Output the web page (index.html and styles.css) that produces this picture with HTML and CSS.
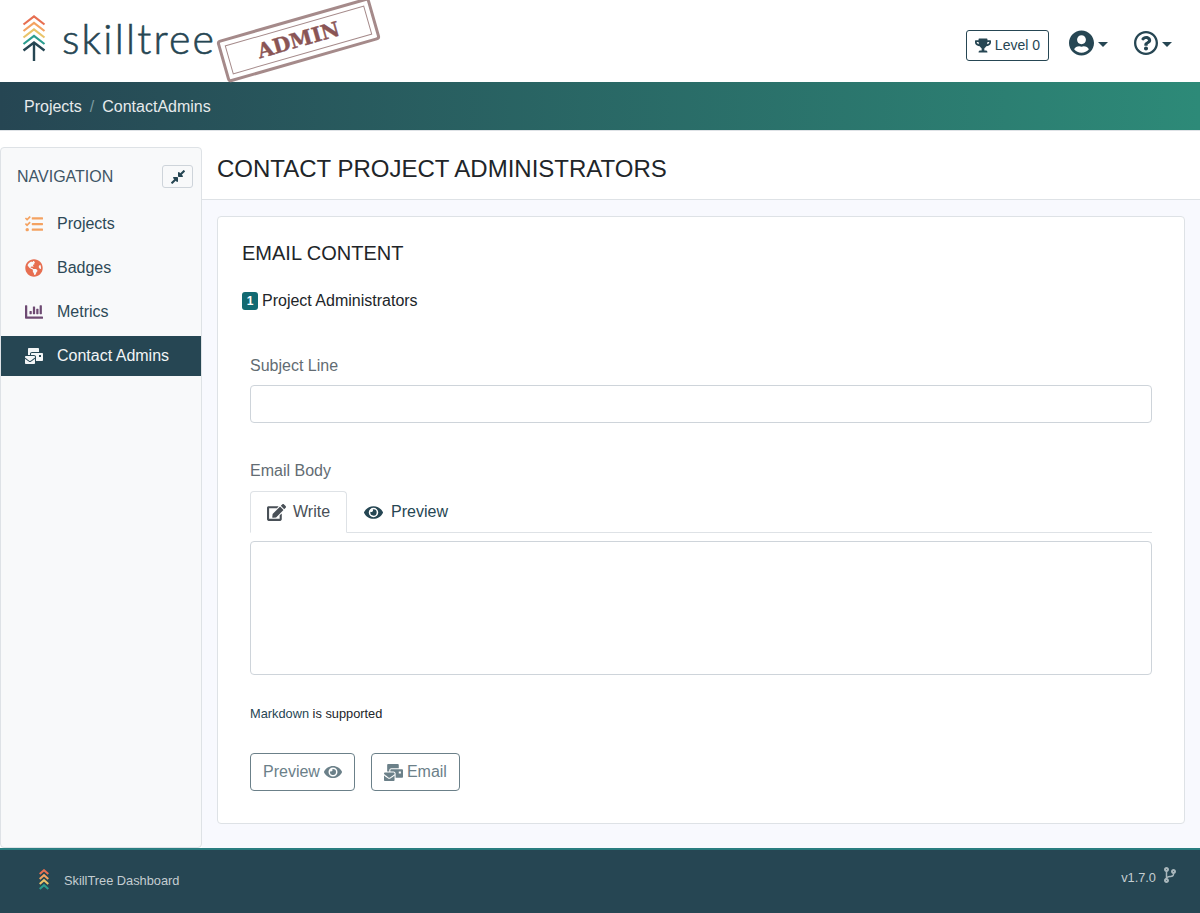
FILE: index.html
```html
<!DOCTYPE html>
<html lang="en">
<head>
<meta charset="utf-8">
<title>SkillTree Dashboard</title>
<link rel="stylesheet" href="styles.css">
</head>
<body>
<svg class="defs" width="0" height="0" aria-hidden="true">
  <defs>
    <symbol id="i-eye" viewBox="0 0 576 512"><path fill="currentColor" d="M572.52 241.4C518.29 135.59 410.93 64 288 64S57.68 135.64 3.48 241.41a32.35 32.35 0 0 0 0 29.19C57.71 376.41 165.07 448 288 448s230.32-71.64 284.52-177.41a32.35 32.35 0 0 0 0-29.19zM288 400a144 144 0 1 1 144-144 143.93 143.93 0 0 1-144 144zm0-240a95.31 95.31 0 0 0-25.31 3.79 47.85 47.85 0 0 1-66.9 66.9A95.78 95.78 0 1 0 288 160z"/></symbol>
    <symbol id="i-mail" viewBox="0 0 576 512"><path fill="currentColor" d="M160 448c-25.6 0-51.2-22.4-64-32-64-44.8-83.2-60.8-96-70.4V480c0 17.67 14.33 32 32 32h256c17.67 0 32-14.33 32-32V345.6c-12.8 9.6-32 25.6-96 70.4-12.8 9.6-38.4 32-64 32zm128-192H32c-17.67 0-32 14.33-32 32v16c25.6 19.2 22.4 19.2 115.2 86.4 9.6 6.4 28.8 25.6 44.8 25.6s35.2-19.2 44.8-22.4c92.8-67.2 89.6-67.2 115.2-86.4V288c0-17.67-14.33-32-32-32zm256-96H224c-17.67 0-32 14.33-32 32v32h96c33.21 0 60.59 25.42 63.71 57.82l.29-.22V416h192c17.67 0 32-14.33 32-32V192c0-17.67-14.33-32-32-32zm-32 128h-64v-64h64v64zm-352-96c0-35.29 28.71-64 64-64h224V32c0-17.67-14.33-32-32-32H128C110.33 0 96 14.33 96 32v192h64v-32z"/></symbol>
  </defs>
</svg>

<header class="topbar">
  <div class="brand">
    <svg class="brand-mark" viewBox="0 0 24 46" aria-hidden="true">
      <g class="brand-chevrons">
        <path class="chev-1" d="M1.500 9.500 12 1.500l10.500 8"/>
        <path class="chev-2" d="M1.500 16 12 8l10.500 8"/>
        <path class="chev-3" d="M1.500 22.500 12 14.500l10.500 8"/>
        <path class="chev-4" d="M1.500 29 12 21l10.500 8"/>
      </g>
      <path class="brand-stem" d="M1.500 35.500 12 27.500l10.500 8M12 27.500V46"/>
    </svg>
    <span class="brand-name">skilltree</span>
    <div class="stamp"><span class="stamp-text">ADMIN</span></div>
  </div>
  <div class="top-actions">
    <span class="level">
      <svg class="level-icon" viewBox="0 0 576 512" aria-hidden="true"><path fill="currentColor" d="M552 64H448V24c0-13.300-10.700-24-24-24H152c-13.300 0-24 10.700-24 24v40H24C10.700 64 0 74.700 0 88v56c0 35.700 22.500 72.400 61.900 100.700 31.500 22.700 69.800 37.100 110 41.700C203.300 338.500 240 360 240 360v72h-48c-35.300 0-64 20.700-64 56v12c0 6.600 5.400 12 12 12h296c6.600 0 12-5.400 12-12v-12c0-35.300-28.700-56-64-56h-48v-72s36.700-21.500 68.100-73.600c40.300-4.600 78.600-19 110-41.700 39.300-28.300 61.900-65 61.900-100.700V88c0-13.300-10.700-24-24-24zM99.300 192.800C74.900 175.200 64 155.600 64 144v-16h64.200c1 32.600 5.800 61.200 12.800 86.200-15.100-5.200-29.200-12.400-41.700-21.400zM512 144c0 16.100-17.700 36.100-35.300 48.800-12.500 9-26.700 16.200-41.800 21.400 7-25 11.800-53.600 12.800-86.200H512v16z"/></svg>
      <span>Level 0</span>
    </span>
    <span class="menu menu-user">
      <svg class="menu-icon" viewBox="0 0 496 512" aria-hidden="true"><path fill="currentColor" d="M248 8C111 8 0 119 0 256s111 248 248 248 248-111 248-248S385 8 248 8zm0 96c48.600 0 88 39.400 88 88s-39.400 88-88 88-88-39.400-88-88 39.400-88 88-88zm0 344c-58.700 0-111.300-26.600-146.500-68.200 18.800-35.400 55.600-59.800 98.500-59.800 2.400 0 4.800.4 7.100 1.100 13 4.200 26.600 6.900 40.900 6.900 14.300 0 28-2.700 40.900-6.900 2.300-.7 4.700-1.100 7.100-1.100 42.900 0 79.700 24.400 98.500 59.800C359.300 421.400 306.700 448 248 448z"/></svg>
      <span class="caret"></span>
    </span>
    <span class="menu menu-help">
      <svg class="menu-icon" viewBox="8 8 496 496" aria-hidden="true"><path fill="currentColor" d="M256 8C119 8 8 119.043 8 256c0 136.997 111 248 248 248s248-111.003 248-248C504 119.083 393 8 256 8zm0 448c-110.532 0-200-89.431-200-200 0-110.495 89.472-200 200-200 110.491 0 200 89.471 200 200 0 110.530-89.431 200-200 200zm107.244-255.200c0 67.052-72.421 68.084-72.421 92.863V300c0 6.627-5.373 12-12 12h-45.647c-6.627 0-12-5.373-12-12v-8.659c0-35.745 27.100-50.034 47.579-61.516 17.561-9.845 28.324-16.541 28.324-29.579 0-17.246-21.999-28.693-39.784-28.693-23.189 0-33.894 10.977-48.942 29.969-4.057 5.120-11.460 6.071-16.666 2.124l-27.824-21.098c-5.107-3.872-6.251-11.066-2.644-16.363C184.846 131.491 214.940 112 261.794 112c49.071 0 101.450 38.304 101.450 88.800zM298 368c0 23.159-18.841 42-42 42s-42-18.841-42-42 18.841-42 42-42 42 18.841 42 42z"/></svg>
      <span class="caret"></span>
    </span>
  </div>
</header>

<nav class="crumbs">
  <span class="crumb-link">Projects</span>
  <span class="crumb-sep">/</span>
  <span class="crumb-current">ContactAdmins</span>
</nav>

<div class="layout">
  <aside class="sidebar">
    <div class="side-head">
      <span class="side-title">NAVIGATION</span>
      <span class="collapse">
        <svg viewBox="0 0 448 512" aria-hidden="true"><path fill="currentColor" d="M4.686 427.314L104 328l-32.922-31.029C55.958 281.851 66.666 256 88.048 256h112C213.303 256 224 266.745 224 280v112c0 21.382-25.803 32.090-40.922 16.971L152 376l-99.314 99.314c-6.248 6.248-16.379 6.248-22.627 0L4.686 449.941c-6.248-6.248-6.248-16.379 0-22.627zM443.314 84.686L344 184l32.922 31.029c15.120 15.120 4.412 40.971-16.970 40.971h-112C234.697 256 224 245.255 224 232V120c0-21.382 25.803-32.090 40.922-16.971L296 136l99.314-99.314c6.248-6.248 16.379-6.248 22.627 0l25.373 25.373c6.248 6.248 6.248 16.379 0 22.627z"/></svg>
      </span>
    </div>
    <ul class="side-list">
      <li class="side-item">
        <svg class="side-icon icon-projects" viewBox="0 0 512 512" aria-hidden="true"><path fill="currentColor" d="M139.610 35.500a12 12 0 0 0-17 0L58.930 98.810l-22.700-22.120a12 12 0 0 0-17 0L3.530 92.410a12 12 0 0 0 0 17l47.590 47.400a12.780 12.780 0 0 0 17.610 0l15.590-15.620L156.520 69a12.090 12.090 0 0 0 .09-17zm0 159.190a12 12 0 0 0-17 0l-63.680 63.720-22.700-22.100a12 12 0 0 0-17 0L3.530 252a12 12 0 0 0 0 17L51 316.500a12.770 12.770 0 0 0 17.600 0l15.700-15.690 72.200-72.220a12 12 0 0 0 .09-16.900zM64 368c-26.490 0-48.590 21.500-48.590 48S37.530 464 64 464a48 48 0 0 0 0-96zm432 16H208a16 16 0 0 0-16 16v32a16 16 0 0 0 16 16h288a16 16 0 0 0 16-16v-32a16 16 0 0 0-16-16zm0-320H208a16 16 0 0 0-16 16v32a16 16 0 0 0 16 16h288a16 16 0 0 0 16-16V80a16 16 0 0 0-16-16zm0 160H208a16 16 0 0 0-16 16v32a16 16 0 0 0 16 16h288a16 16 0 0 0 16-16v-32a16 16 0 0 0-16-16z"/></svg>
        Projects
      </li>
      <li class="side-item">
        <svg class="side-icon icon-badges" viewBox="0 0 496 512" aria-hidden="true"><path fill="currentColor" d="M248 8C111.030 8 0 119.030 0 256s111.030 248 248 248 248-111.030 248-248S384.970 8 248 8zm82.290 357.600c-3.900 3.880-7.990 7.950-11.310 11.280-2.990 3-5.100 6.700-6.170 10.710-1.510 5.660-2.730 11.380-4.770 16.870l-17.390 46.850c-13.760 3-28 4.690-42.650 4.690v-27.380c1.690-12.620-7.640-36.260-22.630-51.250-6-6-9.370-14.140-9.370-22.630v-32.010c0-11.640-6.270-22.340-16.460-27.970-14.370-7.950-34.810-19.060-48.810-26.110-11.480-5.780-22.100-13.140-31.650-21.750l-.8-.72a114.792 114.792 0 0 1-18.060-20.740c-9.380-13.770-24.660-36.420-34.590-51.140 20.470-45.500 57.360-82.040 103.200-101.890l24.010 12.010C203.480 89.740 216 82.010 216 70.110v-11.300c7.990-1.290 16.120-2.110 24.450-2.490l28.300 28.300c6.250 6.250 6.250 16.380 0 22.630L264 112l-10.340 10.340c-3.120 3.120-3.120 8.190 0 11.310l4.690 4.690c3.120 3.120 3.120 8.190 0 11.310l-8 8a8.008 8.008 0 0 1-5.660 2.340h-8.990c-2.080 0-4.080.81-5.580 2.270l-9.920 9.650a8.008 8.008 0 0 0-1.580 9.310l15.590 31.190c2.660 5.320-1.210 11.580-7.150 11.580h-5.640c-1.930 0-3.790-.7-5.240-1.960l-9.280-8.060a16.017 16.017 0 0 0-15.550-3.100l-31.170 10.390a11.950 11.950 0 0 0-8.170 11.340c0 4.530 2.560 8.660 6.610 10.690l11.080 5.540c9.410 4.710 19.790 7.160 30.310 7.160s22.590 27.290 32 32h66.750c8.490 0 16.620 3.370 22.630 9.370l13.690 13.690a30.503 30.503 0 0 1 8.930 21.570 46.536 46.536 0 0 1-13.720 32.980zM417 274.250c-5.790-1.450-10.840-5-14.150-9.970l-17.980-26.970a23.970 23.970 0 0 1 0-26.620l19.590-29.380c2.320-3.470 5.500-6.290 9.240-8.150l12.980-6.490C440.200 193.590 448 223.870 448 256c0 8.670-.74 17.160-1.820 25.540L417 274.250z"/></svg>
        Badges
      </li>
      <li class="side-item">
        <svg class="side-icon icon-metrics" viewBox="0 0 512 512" aria-hidden="true"><path fill="currentColor" d="M332.800 320h38.400c6.400 0 12.800-6.400 12.800-12.800V172.800c0-6.400-6.400-12.800-12.800-12.800h-38.400c-6.400 0-12.800 6.400-12.800 12.800v134.400c0 6.400 6.400 12.800 12.800 12.800zm96 0h38.400c6.400 0 12.800-6.400 12.800-12.800V76.800c0-6.400-6.400-12.800-12.800-12.800h-38.400c-6.400 0-12.800 6.400-12.800 12.800v230.400c0 6.400 6.400 12.800 12.800 12.800zm-288 0h38.400c6.400 0 12.800-6.400 12.800-12.800v-70.400c0-6.400-6.400-12.800-12.800-12.800h-38.400c-6.400 0-12.800 6.400-12.800 12.800v70.400c0 6.400 6.400 12.800 12.800 12.800zm96 0h38.400c6.400 0 12.800-6.400 12.800-12.800V108.800c0-6.400-6.400-12.800-12.800-12.800h-38.400c-6.400 0-12.800 6.400-12.800 12.800v198.400c0 6.400 6.400 12.800 12.800 12.800zM496 384H64V80c0-8.840-7.160-16-16-16H16C7.160 64 0 71.160 0 80v336c0 17.670 14.330 32 32 32h464c8.840 0 16-7.160 16-16v-32c0-8.840-7.160-16-16-16z"/></svg>
        Metrics
      </li>
      <li class="side-item side-active">
        <svg class="side-icon" aria-hidden="true"><use href="#i-mail"/></svg>
        Contact Admins
      </li>
    </ul>
  </aside>

  <main class="content">
    <div class="page-head"><h1 class="page-title">CONTACT PROJECT ADMINISTRATORS</h1></div>
    <div class="page-body">
      <section class="card">
        <h2 class="card-title">EMAIL CONTENT</h2>
        <p class="recipients"><span class="count">1</span> Project Administrators</p>
        <form class="form">
          <label class="field-label">Subject Line</label>
          <input class="input" type="text">
          <label class="field-label body-label">Email Body</label>
          <div class="tabs">
            <span class="tab tab-active">
              <svg class="tab-icon" viewBox="0 0 576 512" aria-hidden="true"><path fill="currentColor" d="M402.600 83.200l90.200 90.200c3.800 3.800 3.800 10 0 13.800L274.400 405.600l-92.800 10.300c-12.400 1.400-22.900-9.100-21.500-21.500l10.300-92.800L388.800 83.200c3.800-3.800 10-3.800 13.800 0zm162-22.900l-48.800-48.800c-15.200-15.200-39.900-15.200-55.200 0l-35.400 35.400c-3.800 3.800-3.800 10 0 13.800l90.200 90.200c3.800 3.800 10 3.800 13.800 0l35.400-35.400c15.200-15.300 15.200-40 0-55.200zM384 346.200V448H64V128h229.800c3.200 0 6.200-1.300 8.500-3.500l40-40c7.600-7.600 2.200-20.500-8.500-20.500H48C21.500 64 0 85.500 0 112v352c0 26.500 21.500 48 48 48h352c26.500 0 48-21.500 48-48V306.200c0-10.700-12.900-16-20.500-8.500l-40 40c-2.200 2.300-3.500 5.300-3.500 8.500z"/></svg>
              Write
            </span>
            <span class="tab">
              <svg class="tab-icon" aria-hidden="true"><use href="#i-eye"/></svg>
              Preview
            </span>
          </div>
          <textarea class="editor"></textarea>
          <p class="hint"><span class="hint-link">Markdown</span> is supported</p>
          <div class="actions">
            <span class="btn">Preview <svg class="btn-eye" aria-hidden="true"><use href="#i-eye"/></svg></span>
            <span class="btn"><svg class="btn-mail" aria-hidden="true"><use href="#i-mail"/></svg> Email</span>
          </div>
        </form>
      </section>
    </div>
  </main>
</div>

<footer class="footer">
  <div class="foot-brand">
    <svg class="foot-mark" viewBox="0 0 10 21" aria-hidden="true">
      <g class="foot-chevrons">
        <path class="chev-1" d="M.7 5 5 1.200 9.300 5"/>
        <path class="chev-2" d="M.7 10 5 6.200 9.300 10"/>
        <path class="chev-3" d="M.7 15 5 11.200 9.300 15"/>
        <path class="chev-4" d="M.7 20 5 16.200 9.300 20"/>
      </g>
    </svg>
    <span class="foot-name">SkillTree Dashboard</span>
  </div>
  <div class="foot-version">
    <span class="foot-number">v1.7.0</span>
    <svg class="foot-branch" viewBox="0 0 384 512" aria-hidden="true"><path fill="currentColor" d="M384 144c0-44.200-35.800-80-80-80s-80 35.800-80 80c0 36.400 24.300 67.100 57.500 76.800-.6 16.100-4.200 28.500-11 36.900-15.400 19.200-49.300 22.400-85.200 25.700-28.200 2.600-57.400 5.400-81.300 16.900v-144c32.500-10.200 56-40.500 56-76.300 0-44.200-35.800-80-80-80S0 35.800 0 80c0 35.800 23.500 66.100 56 76.300v199.300C23.500 365.900 0 396.200 0 432c0 44.200 35.800 80 80 80s80-35.800 80-80c0-34-21.200-63.100-51.200-74.600 3.100-5.200 7.800-9.800 14.900-13.400 16.200-8.200 40.400-10.400 66.100-12.800 42.200-3.900 90-8.400 118.200-43.400 14-17.400 21.100-39.800 21.600-67.900 31.600-10.800 54.400-40.700 54.400-75.900zM80 64c8.800 0 16 7.200 16 16s-7.200 16-16 16-16-7.200-16-16 7.200-16 16-16zm0 384c-8.800 0-16-7.200-16-16s7.200-16 16-16 16 7.200 16 16-7.200 16-16 16zm224-320c8.800 0 16 7.200 16 16s-7.200 16-16 16-16-7.200-16-16 7.200-16 16-16z"/></svg>
  </div>
</footer>
</body>
</html>
```

FILE: styles.css
```css
* { box-sizing: border-box; }
html, body { margin: 0; padding: 0; }
body {
  font-family: "Liberation Sans", Arial, sans-serif;
  font-size: 16px;
  line-height: 24px;
  color: #212529;
  background: #fff;
}
.defs { position: absolute; }

.topbar {
  height: 82px;
  display: flex;
  justify-content: space-between;
  padding: 0 28px 0 22px;
  background: #fff;
}
.brand { position: relative; display: flex; align-items: flex-start; }
.brand-mark { width: 24px; height: 46px; margin-top: 15px; }
.brand-chevrons, .foot-chevrons { fill: none; }
.brand-chevrons { stroke-width: 2.200; }
.foot-chevrons { stroke-width: 2; }
.chev-1 { stroke: #e76f51; }
.chev-2 { stroke: #f4a261; }
.chev-3 { stroke: #e9c46a; }
.chev-4 { stroke: #2a9d8f; }
.brand-stem { fill: none; stroke: #264653; stroke-width: 2.400; }
.brand-name {
  margin: 11px 0 0 16px;
  font-family: "Lato", sans-serif;
  font-weight: 300;
  font-size: 41px;
  line-height: 56px;
  letter-spacing: 2.200px;
  color: #264653;
  -webkit-text-stroke: 0.600px #264653;
}
.stamp {
  position: absolute;
  left: 197px;
  top: 18px;
  width: 159px;
  height: 44px;
  transform: rotate(-16deg);
  border: 3px solid #a58a8a;
  border-radius: 4px;
  outline: 1.500px solid #a58a8a;
  outline-offset: -8px;
  display: flex;
  align-items: center;
  justify-content: center;
}
.stamp-text {
  font-family: "DejaVu Serif", serif;
  font-weight: 700;
  font-size: 20.500px;
  line-height: 24px;
  color: #8a5555;
  -webkit-text-stroke: 0.400px #8a5555;
}
.top-actions { display: flex; align-items: flex-start; color: #264653; }
.level {
  display: flex;
  align-items: center;
  gap: 4px;
  height: 31px;
  margin-top: 30px;
  padding: 0 8px 1px;
  border: 1px solid #264653;
  border-radius: 3px;
  font-size: 14px;
}
.level-icon { width: 16px; height: 15px; }
.menu { display: flex; align-items: center; margin-top: 30px; }
.menu-user { margin-left: 20px; }
.menu-help { margin-left: 26px; }
.menu-icon { width: 25px; height: 26px; }
.menu-help .menu-icon { width: 24px; }
.caret {
  width: 0;
  height: 0;
  margin: 3px 0 0 4px;
  border: 5px solid transparent;
  border-top-color: #264653;
  border-bottom-width: 0;
}

.crumbs {
  height: 49px;
  display: flex;
  align-items: center;
  gap: 8px;
  padding: 1px 24px 0;
  background: linear-gradient(90deg, #264653, #2d8a78);
  border-bottom: 1px solid #dee2e6;
  color: #e6eaec;
}
.crumb-sep { color: #7c9aa0; }

.layout { display: flex; height: 717px; }
.sidebar {
  flex: none;
  width: 202px;
  height: 701px;
  margin-top: 16px;
  background: #f8f9fa;
  border: 1px solid #dee2e6;
  border-radius: 4px;
}
.side-head {
  display: flex;
  justify-content: space-between;
  align-items: center;
  height: 56px;
  padding: 1px 8px 0 16px;
}
.side-title { color: #3f5566; }
.collapse {
  display: flex;
  align-items: center;
  justify-content: center;
  width: 31px;
  height: 23px;
  border: 1px solid #ced4da;
  border-radius: 3px;
  background: #f8f9fa;
  color: #264653;
}
.collapse svg { width: 14px; height: 16px; }
.side-list {
  display: flex;
  flex-direction: column;
  gap: 4px;
  margin: 0;
  padding: 0;
  list-style: none;
}
.side-item {
  display: flex;
  align-items: center;
  gap: 14px;
  height: 40px;
  padding-left: 24px;
  color: #2d4957;
}
.side-active { background: #264653; color: #f3f5f6; }
.side-icon { flex: none; width: 18px; height: 18px; }
.icon-projects { color: #f4a261; }
.icon-badges { color: #e76f51; }
.icon-metrics { color: #6d4a72; }

.content { flex: 1; min-width: 0; display: flex; flex-direction: column; }
.page-head {
  flex: none;
  height: 69px;
  padding: 0 15px;
  background: #fff;
  border-bottom: 1px solid #dee2e6;
}
.page-title {
  margin: 0;
  padding-top: 20px;
  font-size: 24px;
  line-height: 36px;
  font-weight: 400;
}
.page-body { flex: 1; padding: 16px 15px 24px; background: #f8f9fe; }
.card {
  height: 608px;
  padding: 22px 24px 0;
  background: #fff;
  border: 1px solid #dee2e6;
  border-radius: 4px;
}
.card-title {
  margin: 0;
  font-size: 20px;
  line-height: 28px;
  font-weight: 400;
}
.recipients {
  display: flex;
  align-items: center;
  gap: 4px;
  margin: 22px 0 0;
}
.count {
  display: flex;
  align-items: center;
  justify-content: center;
  width: 16px;
  height: 18px;
  background: #126a72;
  border-radius: 3px;
  color: #fff;
  font-size: 12px;
  font-weight: 700;
}
.form { display: flex; flex-direction: column; padding: 0 8px; margin-top: 41px; }
.field-label { display: block; margin-bottom: 7px; color: #636c73; }
.input {
  display: block;
  width: 100%;
  height: 38px;
  border: 1px solid #ced4da;
  border-radius: 4px;
  background: #fff;
}
.body-label { margin-top: 36px; margin-bottom: 8px; }
.tabs {
  display: flex;
  height: 42px;
  border-bottom: 1px solid #dee2e6;
}
.tab {
  display: flex;
  align-items: center;
  gap: 8px;
  height: 42px;
  padding: 0 16px;
  color: #264653;
  border: 1px solid transparent;
}
.tab-active {
  gap: 7px;
  color: #495057;
  background: #fff;
  border-color: #dee2e6 #dee2e6 #fff;
  border-radius: 4px 4px 0 0;
}
.tab-icon { width: 19px; height: 17px; }
.editor {
  display: block;
  width: 100%;
  height: 134px;
  margin: 8px 0 0;
  border: 1px solid #ced4da;
  border-radius: 4px;
  background: #fff;
  resize: none;
}
.hint { margin: 27px 0 0; font-size: 12.800px; line-height: 24px; }
.hint-link { color: #264653; }
.actions { display: flex; gap: 16px; margin-top: 27px; }
.btn {
  display: flex;
  align-items: center;
  gap: 4px;
  height: 38px;
  padding: 0 12px;
  border: 1px solid #6b8089;
  border-radius: 4px;
  color: #6b8089;
}
.btn-eye { width: 18px; height: 16px; }
.btn-mail { width: 19px; height: 17px; }

.footer {
  height: 65px;
  display: flex;
  justify-content: space-between;
  padding: 0 24px 0 39px;
  background: #264653;
  border-top: 2px solid #2a7d80;
  color: #c4cdd1;
  font-size: 12.800px;
}
.foot-brand { display: flex; align-items: center; gap: 15px; height: 60px; }
.foot-name { margin-top: 2px; }
.foot-mark { width: 10px; height: 21px; margin-top: -2px; }
.foot-version { display: flex; align-items: flex-start; gap: 8px; padding-top: 16px; }
.foot-branch { width: 12px; height: 16px; margin-top: 1px; color: #a9b7bc; }
```
